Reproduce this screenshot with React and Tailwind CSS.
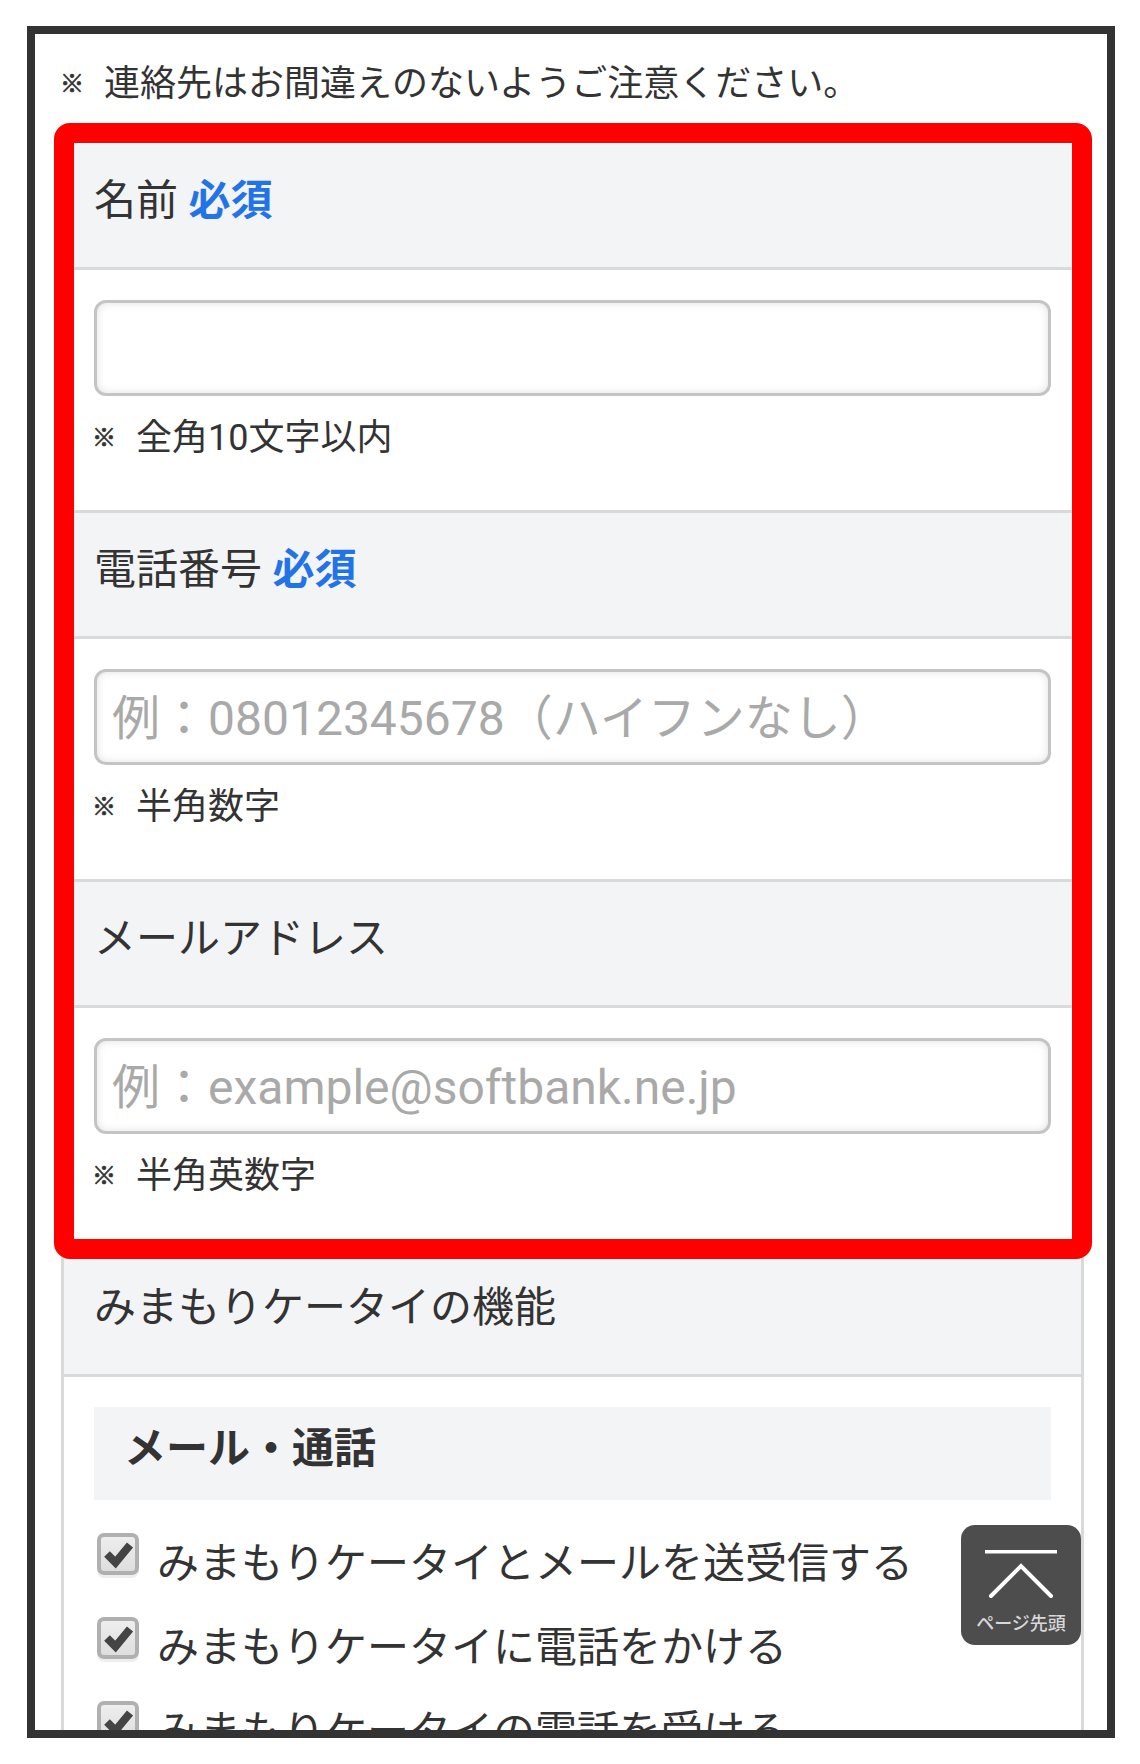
const font = "font-['Roboto','Noto_Sans_CJK_JP',sans-serif]";

function Required() {
  return <span className="font-bold text-[#2273e8]">必須</span>;
}

function Note({ children, className = "" }) {
  return (
    <div className={`flex items-center text-[36px] leading-[48px] text-[#333] ${className}`}>
      <span className="ml-[-2px] w-[44px] shrink-0 text-[24px] [-webkit-text-stroke:0.7px_#333]">※</span>
      <span>{children}</span>
    </div>
  );
}

function Header({ children }) {
  return (
    <div className="h-[126px] border-b-[3px] border-[#d9dadc] bg-[#f3f4f6] px-[30px] pt-[33px] text-[42px] leading-[48px] text-[#333]">
      {children}
    </div>
  );
}

function Field({ label, required, placeholder, note, last }) {
  return (
    <section>
      <Header>
        {label}
        {required && <> <Required /></>}
      </Header>
      <div className={`h-[243px] px-[30px] pt-[30px] ${last ? "" : "border-b-[3px] border-[#d9dadc]"}`}>
        <input
          readOnly
          placeholder={placeholder}
          className={`${font} block h-[96px] w-full rounded-[12px] border-[3px] border-[#c4c4c4] bg-white pt-[2px] pr-[15px] pl-[15px] text-[48px] text-[#333] shadow-[inset_0_0_8px_rgba(0,0,0,0.12)] outline-none placeholder:text-[#a9a9a9]`}
        />
        <Note className="mt-[18px]">{note}</Note>
      </div>
    </section>
  );
}

function Check({ label }) {
  return (
    <label className="flex h-[84px] items-start text-[42px] leading-[56px] text-[#333]">
      <span className="relative ml-[3px] h-[42px] w-[42px] shrink-0 rounded-[7px] border-[4px] border-[#b0b0b0] bg-[linear-gradient(#eeeeee,#dedede)] shadow-[0_3px_0_#eeeeee]">
        <svg viewBox="0 0 42 42" className="absolute top-[-4px] left-[-4px] h-[42px] w-[42px]">
          <polyline points="10,21 18.5,29.5 33,12" fill="none" stroke="#444444" strokeWidth="8" />
        </svg>
      </span>
      <span className="mt-[3px] ml-[18px]">{label}</span>
    </label>
  );
}

export default function App() {
  return (
    <div className={`${font} h-[1764px] w-[1140px] bg-white pt-[26px] pl-[27px]`}>
      <div className="relative h-[1712px] w-[1088px] overflow-hidden border-[8px] border-[#333] bg-white">
        <div className="h-[110px] pt-[26px] pl-[27px]">
          <Note>連絡先はお間違えのないようご注意ください。</Note>
        </div>

        <div className="mr-[23px] ml-[26px] border-x-[3px] border-[#d9dadc]">
          <Field label="名前" required note="全角10文字以内" />
          <Field label="電話番号" required placeholder="例：08012345678（ハイフンなし）" note="半角数字" />
          <Field label="メールアドレス" placeholder="例：example@softbank.ne.jp" note="半角英数字" last />

          <section>
            <Header>みまもりケータイの機能</Header>
            <div className="px-[30px] pt-[30px]">
              <h3 className="mb-[33px] h-[93px] bg-[#f3f4f6] px-[30px] pt-[17px] text-[42px] leading-[50px] font-bold text-[#333]">
                メール・通話
              </h3>
              <Check label="みまもりケータイとメールを送受信する" />
              <Check label="みまもりケータイに電話をかける" />
              <Check label="みまもりケータイの電話を受ける" />
            </div>
          </section>
        </div>

        {/* red highlight over the first three fields */}
        <div className="pointer-events-none absolute top-[89px] left-[19px] h-[1136px] w-[1038px] rounded-[16px] border-[20px] border-[#ff0000]" />

        {/* back-to-top button */}
        <a className="absolute top-[1491px] left-[926px] h-[120px] w-[120px] rounded-[14px] bg-[#4d4d4d]">
          <svg viewBox="0 0 120 120" className="absolute inset-0 h-[120px] w-[120px]">
            <rect x="24" y="25" width="72" height="3.5" fill="#ffffff" />
            <polyline points="30,71 60,41 90,71" fill="none" stroke="#ffffff" strokeWidth="4" strokeLinecap="round" />
          </svg>
          <span className="absolute top-[89px] left-0 w-full text-center text-[18px] leading-[20px] font-medium whitespace-nowrap text-[#d8d8d8]">ページ先頭</span>
        </a>
      </div>
    </div>
  );
}
